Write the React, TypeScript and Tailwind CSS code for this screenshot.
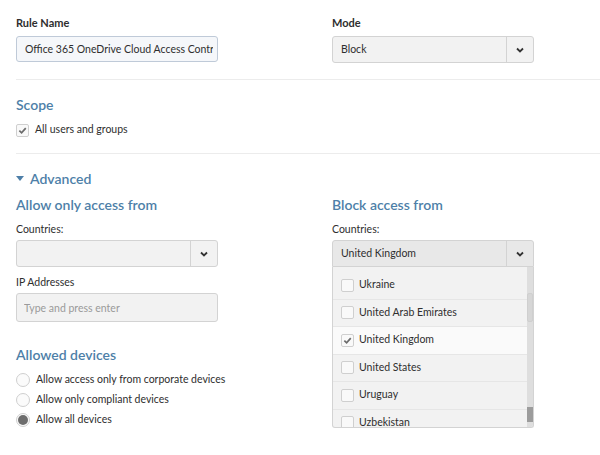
import React from "react";

function Chevron() {
  return (
    <svg width="10" height="10" viewBox="0 0 10 10" className="text-[#333]">
      <path d="M2 3.5 L5 6.5 L8 3.5" fill="none" stroke="currentColor" strokeWidth="1.8" />
    </svg>
  );
}

function Check({ size = 9 }: { size?: number }) {
  return (
    <svg width={size} height={size} viewBox="0 0 10 10">
      <path d="M1.5 5.2 L4 7.6 L8.6 2.4" fill="none" stroke="#6b6b6b" strokeWidth="1.9" />
    </svg>
  );
}

function Box({ checked }: { checked?: boolean }) {
  return (
    <span className="flex h-[13px] w-[13px] shrink-0 items-center justify-center rounded-[2px] border border-[#cfcfcf] bg-[#f9f9f9]">
      {checked && <Check />}
    </span>
  );
}

function Select({ value, open }: { value?: string; open?: boolean }) {
  return (
    <div
      className={`flex h-[27px] w-[202px] items-center rounded-[3px] border border-[#d3d3d3] ${
        open ? "rounded-b-none bg-[#e8e8e8]" : "bg-[#f2f2f2]"
      }`}
    >
      <div className="flex-1 truncate pl-[8px] text-[10.5px] text-[#2e2e2e]">{value}</div>
      <div className="flex h-full w-[27px] items-center justify-center border-l border-[#d3d3d3]">
        <Chevron />
      </div>
    </div>
  );
}

function Radio({ checked, label }: { checked?: boolean; label: string }) {
  return (
    <div className="flex h-[20px] items-center gap-[6px]">
      <span className="flex h-[14px] w-[14px] items-center justify-center rounded-full border border-[#cfcfcf] bg-[#fbfbfb]">
        {checked && <span className="h-[10px] w-[10px] rounded-full bg-[#6d6d6d]" />}
      </span>
      <span className="text-[10.5px] text-[#2e2e2e]">{label}</span>
    </div>
  );
}

const countries = [
  { name: "Ukraine" },
  { name: "United Arab Emirates" },
  { name: "United Kingdom", checked: true },
  { name: "United States" },
  { name: "Uruguay" },
  { name: "Uzbekistan" },
];

export default function App() {
  const heading = "text-[#4e7fa8] font-semibold";
  return (
    <div
      className="h-[455px] w-[600px] overflow-hidden bg-white pl-[16px] text-[#2e2e2e]"
      style={{ fontFamily: "Lato, 'Open Sans', sans-serif" }}
    >
      {/* Rule name / mode */}
      <div className="flex pt-[15px]">
        <div className="w-[316px]">
          <div className="h-[16px] text-[11px] font-bold leading-[16px]">Rule Name</div>
          <input
            readOnly
            value="Office 365 OneDrive Cloud Access Control"
            className="mt-[5px] block h-[26px] w-[202px] rounded-[3px] border border-[#bfcad8] bg-[#f5f7fa] pl-[8px] pr-[4px] text-[10.5px] text-[#2e2e2e] outline-none"
          />
        </div>
        <div>
          <div className="h-[16px] text-[11px] font-bold leading-[16px]">Mode</div>
          <div className="mt-[5px]">
            <Select value="Block" />
          </div>
        </div>
      </div>

      <div className="mt-[16px] h-px bg-[#ececec]" />

      {/* Scope */}
      <div className={`mt-[15px] h-[20px] text-[14px] leading-[20px] ${heading}`}>Scope</div>
      <div className="mt-[8px] flex h-[14px] items-center gap-[6px]">
        <Box checked />
        <span className="text-[10.5px]">All users and groups</span>
      </div>

      <div className="mt-[16px] h-px bg-[#ececec]" />

      {/* Advanced */}
      <div className={`mt-[15px] flex h-[20px] items-center gap-[6px] text-[14px] leading-[20px] ${heading}`}>
        <svg width="8" height="6" viewBox="0 0 8 6">
          <path d="M0 0 L8 0 L4 5 Z" fill="#4e7fa8" />
        </svg>
        Advanced
      </div>

      <div className="mt-[6px] flex">
        <div className="w-[316px]">
          <div className={`h-[20px] text-[14px] leading-[20px] ${heading}`}>Allow only access from</div>
          <div className="mt-[6px] h-[16px] text-[10.5px] leading-[16px]">Countries:</div>
          <div className="mt-[3px]">
            <Select />
          </div>
          <div className="mt-[7px] h-[16px] text-[10.5px] leading-[16px]">IP Addresses</div>
          <input
            readOnly
            placeholder="Type and press enter"
            className="mt-[3px] block h-[29px] w-[202px] rounded-[3px] border border-[#d3d3d3] bg-[#f2f2f2] px-[7px] text-[10.5px] outline-none placeholder:text-[#9a9a9a]"
          />

          <div className={`mt-[23px] h-[20px] text-[14px] leading-[20px] ${heading}`}>Allowed devices</div>
          <div className="mt-[5px]">
            <Radio label="Allow access only from corporate devices" />
            <Radio label="Allow only compliant devices" />
            <Radio checked label="Allow all devices" />
          </div>
        </div>

        <div>
          <div className={`h-[20px] text-[14px] leading-[20px] ${heading}`}>Block access from</div>
          <div className="mt-[6px] h-[16px] text-[10.5px] leading-[16px]">Countries:</div>
          <div className="relative mt-[3px]">
            <Select value="United Kingdom" open />
            <div className="absolute left-0 top-full flex h-[161px] w-[202px] overflow-hidden rounded-b-[3px] border border-t-0 border-[#d3d3d3] bg-[#f2f2f2]">
              <div className="flex-1 pt-[5px]">
                {countries.map((c) => (
                  <div
                    key={c.name}
                    className={`flex h-[27.5px] items-center gap-[5px] border-b border-[#e6e6e6] pl-[8px] text-[10.5px] ${
                      c.checked ? "bg-[#fafafa]" : ""
                    }`}
                  >
                    <Box checked={c.checked} />
                    {c.name}
                  </div>
                ))}
              </div>
              <div className="relative w-[6px] bg-[#dedede]">
                <div className="absolute left-0 top-[26px] h-[29px] w-[6px] rounded-[2px] border border-[#cfcfcf] bg-[#d6d6d6]" />
                <div className="absolute bottom-[5px] left-0 h-[15px] w-[6px] bg-[#9c9c9c]" />
              </div>
            </div>
          </div>
        </div>
      </div>
    </div>
  );
}
